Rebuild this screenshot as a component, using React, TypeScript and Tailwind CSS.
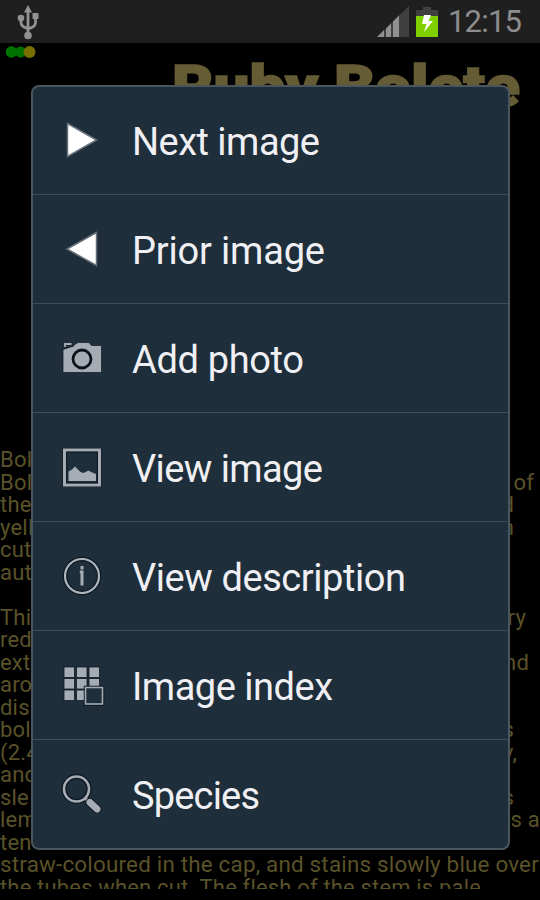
import React from 'react'

interface MenuEntry {
  label: string
  icon: React.ReactNode
  /** Drawn text width in px */
  width: number
}

interface BodyLine {
  left: string
  right?: string
  /** Gap between the last glyph and the screen edge */
  inset?: number
}

const menuEntries: MenuEntry[] = [
  {
    label: 'Next image',
    width: 188,
    icon: <path d="M8.5 6.5 L37.5 23 L8.5 39.5Z" fill="#fff" stroke="#68717a" strokeWidth="1.5" />,
  },
  {
    label: 'Prior image',
    width: 193,
    icon: <path d="M37.5 6.5 L8 23 L37.5 39.5Z" fill="#fff" stroke="#68717a" strokeWidth="1.5" />,
  },
  {
    label: 'Add photo',
    width: 172,
    icon: (
      <>
        <path
          d="M4 37.5V13l7-2.5 4-.5 4-2.5h11l2.5 3H42.5v27Z"
          fill="#a5acb4"
          stroke="#17232c"
          strokeWidth=".8"
        />
        <path d="M6 12V9h6.500" fill="none" stroke="#a5acb4" strokeWidth="1.8" />
        <path d="M4 14L15 10.500" stroke="#111c25" strokeWidth="1.5" />
        <circle cx="23" cy="24" r="9" fill="#a5acb4" stroke="#0c1319" strokeWidth="2.8" />
      </>
    ),
  },
  {
    label: 'View image',
    width: 191,
    icon: (
      <>
        <rect x="3.5" y="4" width="39" height="39" fill="#0e1921" />
        <rect x="5.5" y="6" width="35" height="35" fill="#1e2e3b" stroke="#a5acb4" strokeWidth="3" />
        <rect x="7.7" y="8.2" width="30.6" height="30.6" fill="none" stroke="#0e1921" />
        <path d="M9.5 37V27.500l3.500-2 3-3 5.500 5.500 3 1 5-2.500 2.500 1.500 5 2v7Z" fill="#a5acb4" />
      </>
    ),
  },
  {
    label: 'View description',
    width: 274,
    icon: (
      <>
        <circle cx="23" cy="23" r="17" fill="none" stroke="#0e1921" strokeWidth="4.5" />
        <circle cx="23" cy="23" r="17" fill="none" stroke="#aeb5bd" strokeWidth="2.2" />
        <path d="M20.8 19H23v13.500M23 13v3.500" fill="none" stroke="#a5acb4" strokeWidth="3" />
      </>
    ),
  },
  {
    label: 'Image index',
    width: 201,
    icon: (
      <>
        <g fill="#a5acb4" stroke="#0e1921" strokeWidth=".8">
          {[5, 17.5, 30].map((x) =>
            [5, 16.5, 28].map((y) => <rect key={`${x}-${y}`} x={x} y={y} width="10.5" height="10.5" />)
          )}
        </g>
        <rect x="26.5" y="25.5" width="17" height="16.5" fill="#1e2e3b" stroke="#0e1921" strokeWidth="3.5" />
        <rect x="26.5" y="25.5" width="17" height="16.5" fill="#1e2e3b" stroke="#a5acb4" strokeWidth="1.6" />
      </>
    ),
  },
  {
    label: 'Species',
    width: 128,
    icon: (
      <>
        <circle cx="17.5" cy="18" r="12.5" fill="none" stroke="#0e1921" strokeWidth="5" />
        <path d="M26 27l5 5" stroke="#a5acb4" strokeWidth="3" />
        <path d="M31 31.500l7 6.500" stroke="#0e1921" strokeWidth="9" strokeLinecap="round" />
        <path d="M31 31.500l7 6.500" stroke="#a5acb4" strokeWidth="7" strokeLinecap="round" />
        <circle cx="17.5" cy="18" r="12.5" fill="none" stroke="#a5acb4" strokeWidth="2.6" />
      </>
    ),
  },
]

const bodyLines: BodyLine[] = [
  { left: 'Bol' },
  { left: 'Bol', right: 'of', inset: 6 },
  { left: 'the', right: 'd', inset: 26 },
  { left: 'yell', right: 'n', inset: 26 },
  { left: 'cut' },
  { left: 'aut' },
  { left: '' },
  { left: 'Thi', right: 'ry', inset: 14 },
  { left: 'red' },
  { left: 'ext', right: 'nd', inset: 11 },
  { left: 'aro' },
  { left: 'dis' },
  { left: 'bol', right: 's', inset: 26 },
  { left: '(2.4', right: 'v,', inset: 23 },
  { left: 'and' },
  { left: 'sle', right: 's', inset: 26 },
  { left: 'lem', right: 's a', inset: 0 },
  { left: 'ten' },
]

function UsbIcon() {
  return (
    <svg className="h-[36px] w-[24px]" viewBox="0 0 24 36" fill="none" stroke="#929292" strokeWidth="2.8">
      <path d="M12 8v24M5 14v4.500q0 4.500 7 6M19.500 12v6.500q0 5-7.500 6" />
      <path d="M12 1l4 7.500H8Z" fill="#929292" stroke="none" />
      <circle cx="5" cy="14" r="3.3" fill="#929292" stroke="none" />
      <rect x="16.5" y="9" width="6" height="6" fill="#929292" stroke="none" />
      <circle cx="12" cy="31.5" r="3.8" fill="#929292" stroke="none" />
    </svg>
  )
}

function SignalIcon() {
  return (
    <svg className="h-8 w-8" viewBox="0 0 32 32">
      <path d="M0 31L32 0v31Z" fill="#404040" />
      <path d="M0 31L7 24v7ZM9 22.500l5-5V31H9ZM16 15.500l6-6V31h-6Z" fill="#909090" />
    </svg>
  )
}

function BatteryIcon() {
  return (
    <svg className="h-8 w-[22px]" viewBox="0 0 22 32">
      <path d="M0 4h7V1h8v3h7v6H0Z" fill="#404040" />
      <path d="M0 10h22v21H0Z" fill="#80d000" />
      <path d="M8 9h7l-2.500 6H17L8 26l2.500-8H6Z" fill="#fff" />
    </svg>
  )
}

function StatusBar() {
  return (
    <header className="flex h-[43px] items-start justify-between bg-[#1f1f1f] pr-[18px] pl-4">
      <div className="pt-1">
        <UsbIcon />
      </div>
      <div className="flex items-start pt-1.5">
        <SignalIcon />
        <div className="ml-[7px]">
          <BatteryIcon />
        </div>
        <svg className="ml-[9px] h-8 w-[75px] overflow-visible" viewBox="0 0 75 32">
          <text x="1" y="26" fontSize="31" textLength="74" fill="#8d8d8d">
            12:15
          </text>
        </svg>
      </div>
    </header>
  )
}

function SpeciesPage() {
  return (
    <main className="h-[847px] overflow-hidden text-[#5a5228]">
      <div className="flex h-[397px] items-start justify-between pl-1.5">
        <svg className="mt-[2px] h-[14px] w-[31px]" viewBox="0 0 31 14">
          <circle cx="5.5" cy="7" r="5.8" fill="#007400" />
          <circle cx="14.5" cy="7" r="5.5" fill="#007000" />
          <circle cx="23.5" cy="7" r="6" fill="#777000" />
        </svg>
        <svg className="mt-2 mr-[18px] h-[64px] w-[350px] overflow-visible" viewBox="0 0 350 64">
          <text
            x="0"
            y="55"
            fontSize="58"
            fontWeight="900"
            textLength="348"
            lengthAdjust="spacingAndGlyphs"
            fill="#655c36"
            stroke="#655c36"
            strokeWidth="1.5"
          >
            Ruby Bolete
          </text>
        </svg>
      </div>
      <div className="pt-[9px] text-[22px] leading-[22.5px] tracking-[0.2px]">
        {bodyLines.map((line, i) => (
          <div key={i} className="flex h-[22.5px] justify-between whitespace-pre">
            <span>{line.left}</span>
            <span style={{ marginRight: line.inset ?? 0 }}>{line.right}</span>
          </div>
        ))}
        <svg className="h-[35px] w-[540px]" viewBox="0 0 540 35">
          <text x="0" y="18" fontSize="22" textLength="539" lengthAdjust="spacingAndGlyphs" fill="#5a5228">
            straw-coloured in the cap, and stains slowly blue over
          </text>
          <text x="0" y="41" fontSize="22" textLength="481" lengthAdjust="spacingAndGlyphs" fill="#5a5228">
            the tubes when cut. The flesh of the stem is pale
          </text>
        </svg>
      </div>
    </main>
  )
}

function OptionsMenu() {
  return (
    <div
      role="menu"
      className="absolute top-[85px] left-[31px] h-[765px] w-[479px] overflow-hidden rounded-lg border-2 border-[#4a565d] bg-[#1e2e3b]"
    >
      {menuEntries.map((entry) => (
        <button
          key={entry.label}
          role="menuitem"
          className="flex h-[109px] w-full items-center border-b border-[#3d4c58] pb-px first:h-[108px] last:border-b-0"
        >
          <svg className="ml-[26px] h-[46px] w-[46px] shrink-0" viewBox="0 0 46 46">
            {entry.icon}
          </svg>
          <svg className="ml-7 h-[54px] w-[280px] overflow-visible" viewBox="0 0 280 54">
            <text x="-1" y="42" fontSize="38" textLength={entry.width} fill="#f0f0f4">
              {entry.label}
            </text>
          </svg>
        </button>
      ))}
    </div>
  )
}

export default function App() {
  return (
    <div className="relative h-[900px] w-[540px] overflow-hidden bg-black font-['Roboto',sans-serif]">
      <StatusBar />
      <SpeciesPage />
      <OptionsMenu />
    </div>
  )
}
